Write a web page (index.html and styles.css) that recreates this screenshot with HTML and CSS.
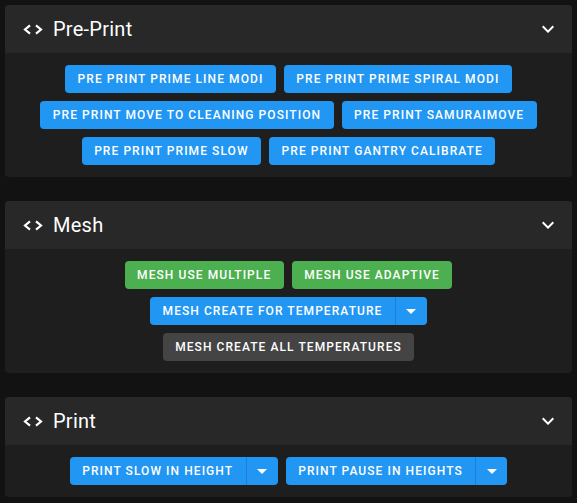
FILE: index.html
```html
<!DOCTYPE html>
<html>
<head>
<meta charset="utf-8">
<link rel="stylesheet" href="styles.css">
</head>
<body>
<div class="page">
  <section class="card">
    <header class="card-head">
      <svg class="icon" viewBox="0 0 24 24"><path d="M9 8.3L4 12.5L9 16.7M15 8.3L20 12.5L15 16.7"/></svg>
      <span class="title">Pre-Print</span>
      <svg class="chev" viewBox="0 0 24 24"><path d="M7.41,8.58L12,13.17L16.59,8.58L18,10L12,16L6,10L7.41,8.58Z"/></svg>
    </header>
    <div class="card-body">
      <button class="btn blue">Pre Print Prime Line Modi</button>
      <button class="btn blue">Pre Print Prime Spiral Modi</button>
      <button class="btn blue">Pre Print Move to Cleaning Position</button>
      <button class="btn blue">Pre Print Samuraimove</button>
      <button class="btn blue">Pre Print Prime Slow</button>
      <button class="btn blue">Pre Print Gantry Calibrate</button>
    </div>
  </section>

  <section class="card">
    <header class="card-head">
      <svg class="icon" viewBox="0 0 24 24"><path d="M9 8.3L4 12.5L9 16.7M15 8.3L20 12.5L15 16.7"/></svg>
      <span class="title">Mesh</span>
      <svg class="chev" viewBox="0 0 24 24"><path d="M7.41,8.58L12,13.17L16.59,8.58L18,10L12,16L6,10L7.41,8.58Z"/></svg>
    </header>
    <div class="card-body">
      <button class="btn green">Mesh Use Multiple</button>
      <button class="btn green">Mesh Use Adaptive</button>
      <span class="break"></span>
      <div class="split blue">
        <button class="btn-main">Mesh Create for Temperature</button>
        <button class="btn-drop"><svg viewBox="0 0 24 24"><path d="M7,10L12,15L17,10H7Z"/></svg></button>
      </div>
      <span class="break"></span>
      <button class="btn grey">Mesh Create All Temperatures</button>
    </div>
  </section>

  <section class="card">
    <header class="card-head">
      <svg class="icon" viewBox="0 0 24 24"><path d="M9 8.3L4 12.5L9 16.7M15 8.3L20 12.5L15 16.7"/></svg>
      <span class="title">Print</span>
      <svg class="chev" viewBox="0 0 24 24"><path d="M7.41,8.58L12,13.17L16.59,8.58L18,10L12,16L6,10L7.41,8.58Z"/></svg>
    </header>
    <div class="card-body">
      <div class="split blue">
        <button class="btn-main">Print Slow in Height</button>
        <button class="btn-drop"><svg viewBox="0 0 24 24"><path d="M7,10L12,15L17,10H7Z"/></svg></button>
      </div>
      <div class="split blue">
        <button class="btn-main">Print Pause in Heights</button>
        <button class="btn-drop"><svg viewBox="0 0 24 24"><path d="M7,10L12,15L17,10H7Z"/></svg></button>
      </div>
    </div>
  </section>
</div>
</body>
</html>
```

FILE: styles.css
```css
* { box-sizing: border-box; }
html, body {
  margin: 0;
  padding: 0;
  background: #121212;
  font-family: Roboto, "Liberation Sans", sans-serif;
  color: #fff;
}
.page {
  padding: 5px;
  display: flex;
  flex-direction: column;
  gap: 24px;
}
.card {
  border-radius: 4px;
  overflow: hidden;
  background: #1e1e1e;
}
.card-head {
  height: 48px;
  background: #282828;
  display: flex;
  align-items: center;
  padding: 0 12px 0 16px;
}
.icon {
  width: 24px;
  height: 24px;
  fill: none;
  stroke: #fff;
  stroke-width: 2.2;
  stroke-linecap: butt;
  stroke-linejoin: miter;
}
.title {
  margin-left: 8px;
  font-size: 20px;
  font-weight: 400;
  letter-spacing: 0.0125em;
  flex: 1;
}
.chev {
  width: 24px;
  height: 24px;
  fill: #fff;
}
.card-body {
  padding: 8px;
  display: flex;
  flex-wrap: wrap;
  justify-content: center;
  column-gap: 8px;
}
.break {
  flex-basis: 100%;
  height: 0;
}
.btn, .split {
  margin: 4px 0;
  height: 28px;
  border-radius: 4px;
}
.btn, .btn-main {
  border: none;
  color: #fff;
  font-family: Roboto, "Liberation Sans", sans-serif;
  font-size: 12px;
  font-weight: 500;
  letter-spacing: 0.0892857em;
  text-transform: uppercase;
  padding: 0 12.5px;
  height: 28px;
  background: transparent;
}
.btn.blue { background: #2196f3; }
.btn.green { background: #4caf50; }
.btn.grey { background: #444444; }
.split {
  display: flex;
  background: #2196f3;
  overflow: hidden;
}
.btn-drop {
  width: 32px;
  height: 28px;
  border: none;
  border-left: 1px solid rgba(0, 0, 0, 0.14);
  background: transparent;
  padding: 0;
  display: flex;
  align-items: center;
  justify-content: center;
}
.btn-drop svg {
  width: 24px;
  height: 24px;
  fill: #fff;
}
```
